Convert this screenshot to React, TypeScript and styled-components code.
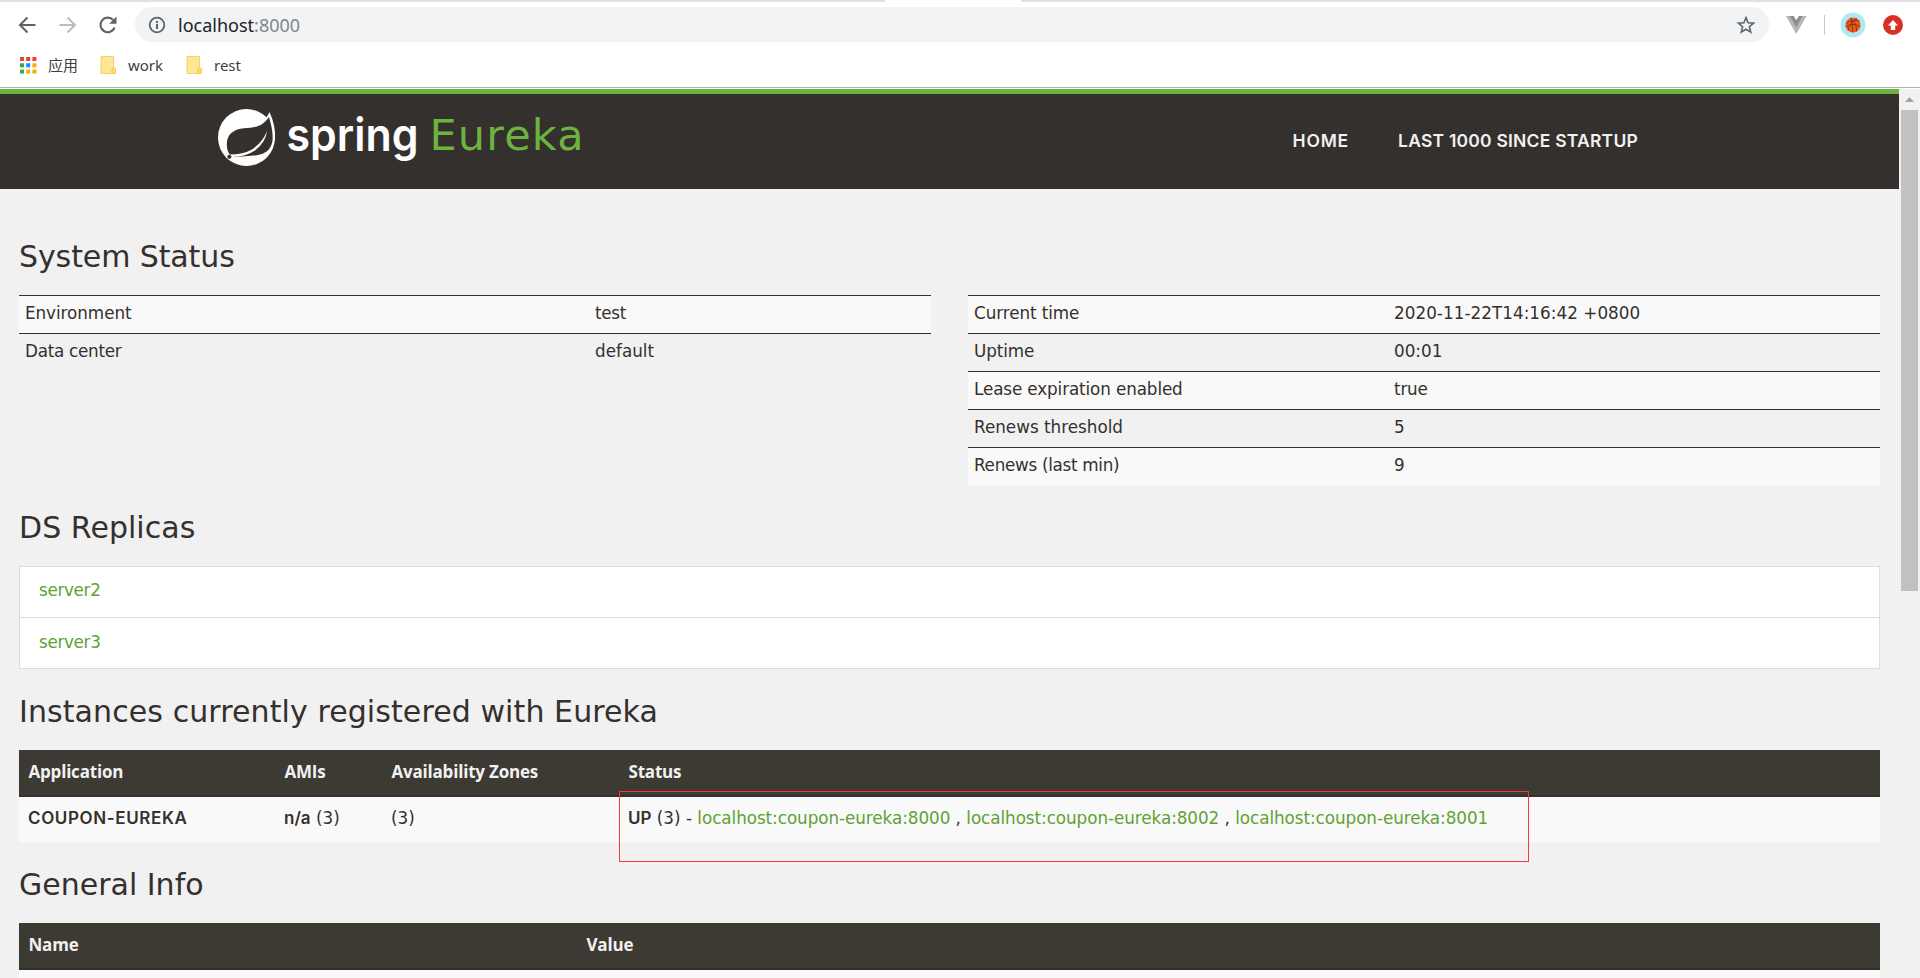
import React from "react";
import styled, { createGlobalStyle } from "styled-components";

const color = {
  ink: "#34302d",
  green: "#6db33f",
  link: "#5fa134",
  page: "#f1f1f1",
  stripe: "#f9f9f9",
  head: "#3d3933",
};

const GlobalStyle = createGlobalStyle`
  * { box-sizing: border-box; }
  body { margin: 0; overflow: hidden; background: ${color.page}; }
`;

const Window = styled.div`
  display: flex;
  flex-direction: column;
  width: 1920px;
  height: 978px;
  overflow: hidden;
  font-family: "DejaVu Sans", sans-serif;
  color: ${color.ink};
`;

/* Browser chrome */
const TabStrip = styled.div`
  display: flex;
  justify-content: space-between;
  height: 2px;
  flex: none;
  background: #fff;
`;
const StripPart = styled.div<{ $w: number }>`
  width: ${(p) => p.$w}px;
  background: #dee1e6;
`;
const Toolbar = styled.div`
  display: flex;
  align-items: center;
  height: 45px;
  flex: none;
  padding-left: 17px;
  background: #fff;
`;
const Glyph = styled.svg<{ $gap?: number }>`
  display: block;
  flex: none;
  margin-right: ${(p) => p.$gap ?? 0}px;
`;
const Omnibox = styled.div`
  display: flex;
  align-items: center;
  width: 1634px;
  height: 35px;
  margin-right: 17px;
  padding: 0 13px;
  border-radius: 18px;
  background: #f1f3f4;
`;
const Address = styled.div`
  flex: 1;
  font: 400 18px/24px "Noto Sans", sans-serif;
  color: #202124;
`;
const Port = styled.span`
  color: #80868b;
`;
const Divider = styled.div`
  width: 1px;
  height: 20px;
  margin: 0 15px 0 17px;
  background: #c9cbce;
`;
const Bookmarks = styled.div`
  display: flex;
  align-items: center;
  height: 41px;
  flex: none;
  padding: 0 0 5px 19px;
  border-bottom: 1px solid #b4b4b4;
  background: #fff;
`;
const Bookmark = styled.div<{ $w: number }>`
  display: flex;
  align-items: center;
  width: ${(p) => p.$w}px;
  font: 400 15px/20px "Noto Sans", "Noto Sans CJK SC", sans-serif;
  color: #3c4043;
`;

/* Page viewport */
const Viewport = styled.div`
  display: flex;
  flex: 1;
  min-height: 0;
  border-top: 1px solid #fff;
`;
const Page = styled.div`
  width: 1899px;
  overflow: hidden;
  background: ${color.page};
`;
const Scrollbar = styled.div`
  display: flex;
  flex-direction: column;
  align-items: center;
  width: 21px;
  background: #f1f1f1;
`;
const ArrowBox = styled.div`
  display: flex;
  align-items: center;
  justify-content: center;
  height: 21px;
`;
const Thumb = styled.div`
  width: 17px;
  height: 481px;
  background: #c1c1c1;
`;

const Navbar = styled.header`
  display: flex;
  justify-content: space-between;
  height: 100px;
  padding: 6px 261px 0 215px;
  border-top: 5px solid ${color.green};
  background: ${color.ink};
`;
const Menu = styled.nav`
  display: flex;
  gap: 49px;
  padding-top: 29px;
`;
const MenuLink = styled.a<{ $ls: number }>`
  font: 600 17.5px/24px Inter, sans-serif;
  letter-spacing: ${(p) => p.$ls}px;
  white-space: nowrap;
  color: #f1f1f1;
`;

const Content = styled.main`
  padding: 25px 19px 0;
`;
const Heading = styled.h1<{ $ls: number }>`
  margin: 26px 0 22px;
  font: 400 30px/33px "DejaVu Sans", sans-serif;
  letter-spacing: ${(p) => p.$ls}px;
`;
const Columns = styled.div`
  display: flex;
  align-items: flex-start;
  gap: 37px;
`;
const StatusTable = styled.div`
  width: 912px;
`;
const StatusRow = styled.div<{ $first: number }>`
  display: grid;
  grid-template-columns: ${(p) => p.$first}px 1fr;
  height: 38px;
  border-top: 1px solid ${color.ink};
  line-height: 25px;
  &:nth-child(odd) {
    background: ${color.stripe};
  }
`;
const StatusCell = styled.div<{ $ls: number }>`
  padding: 5px 6px 0;
  font-size: 16.8px;
  letter-spacing: ${(p) => p.$ls}px;
  white-space: nowrap;
`;
const ReplicaList = styled.div`
  width: 1861px;
  border: 1px solid #ddd;
  background: #fff;
`;
const Replica = styled.a`
  display: block;
  height: 50px;
  padding: 11px 19px 0;
  font-size: 16.8px;
  line-height: 25px;
  letter-spacing: -0.33px;
  color: ${color.link};
  & + & {
    height: 51px;
    padding-top: 12px;
    border-top: 1px solid #ddd;
  }
`;
const DataTable = styled.section<{ $cols: string }>`
  position: relative;
  display: grid;
  grid-template-columns: ${(p) => p.$cols};
  width: 1861px;
`;
const HeadCell = styled.div`
  height: 47px;
  padding: 10px 9.5px 0;
  border-bottom: 2px solid ${color.ink};
  background: ${color.head};
  font: 700 17px/23px "Open Sans", sans-serif;
  letter-spacing: -0.2px;
  color: #f1f1f1;
`;
const BodyCell = styled.div`
  height: 45px;
  padding: 9px 9px 0;
  background: ${color.stripe};
  font-size: 16.8px;
  line-height: 25px;
  white-space: nowrap;
`;
const Strong = styled.b<{ $ls?: number }>`
  font: 600 17px/23px Inter, sans-serif;
  letter-spacing: ${(p) => p.$ls ?? 0}px;
`;
const InstanceLink = styled.a`
  letter-spacing: -0.06px;
  color: ${color.link};
`;
const Highlight = styled.div`
  position: absolute;
  left: 600px;
  top: 41px;
  width: 910px;
  height: 71px;
  border: 1px solid #f53b3b;
`;

const Folder = () => (
  <Glyph width="18" height="20" viewBox="0 0 18 20" $gap={11}>
    <path d="M2 1.5h12.5v12l1.5.8v4.2H2z" fill="#ffe694" stroke="#f5d265" />
    <rect x="13" y="13" width="3.5" height="5.5" rx="1" fill="#ffe070" stroke="#f2c94c" />
  </Glyph>
);

const appColors = ["#ea4335", "#ea4335", "#ea4335", "#34a853", "#1a8cff", "#fbab05", "#34a853", "#fbab05", "#fbab05"];

const SpringLogo = () => (
  <Glyph width="370" height="75" viewBox="0 0 370 75">
    <circle cx="31.5" cy="37.5" r="28.5" fill="#fff" />
    <path d="M47 21Q52 18 54.5 12Q61 26 60 40L50 55Z" fill="#fff" />
    <path
      d="M54 17Q58.8 33 57.3 42C55.5 50 50 54 42 55.2Q32 56.6 17 57Q12 53 11.8 45C11.5 34 19 29 29 28.2C40 27.5 47 27 54 17Z"
      fill={color.ink}
    />
    <path d="M52 31Q48 42 37 49.5Q28 54.5 15 54.5L17 57Q31 56.5 40 50.5Q51 42 52 31Z" fill="#fff" />
    <circle cx="14.3" cy="56.8" r="2.3" fill={color.ink} stroke="#fff" strokeWidth=".5" />
    <text x="71.5" y="50.5" fontFamily="Inter" fontWeight="600" fontSize="46" fill="#fff" textLength="132" lengthAdjust="spacingAndGlyphs">
      spring
    </text>
    <text x="214.5" y="50" fontFamily="DejaVu Sans" fontSize="43" fill={color.green} textLength="154" lengthAdjust="spacing">
      Eureka
    </text>
  </Glyph>
);

type Row = [string, number, string, number];
const environment: Row[] = [
  ["Environment", -0.06, "test", -0.3],
  ["Data center", -0.27, "default", 0],
];
const runtime: Row[] = [
  ["Current time", -0.08, "2020-11-22T14:16:42 +0800", 0.04],
  ["Uptime", -0.1, "00:01", 0],
  ["Lease expiration enabled", -0.12, "true", -0.2],
  ["Renews threshold", 0, "5", 0],
  ["Renews (last min)", -0.3, "9", 0],
];

const Status = ({ rows, first }: { rows: Row[]; first: number }) => (
  <StatusTable>
    {rows.map(([name, nameLs, value, valueLs]) => (
      <StatusRow key={name} $first={first}>
        <StatusCell $ls={nameLs}>{name}</StatusCell>
        <StatusCell $ls={valueLs}>{value}</StatusCell>
      </StatusRow>
    ))}
  </StatusTable>
);

export default function App() {
  return (
    <Window>
      <GlobalStyle />
      <TabStrip>
        <StripPart $w={885} />
        <StripPart $w={899} />
      </TabStrip>
      <Toolbar>
        <Glyph width="20" height="20" viewBox="0 0 20 20" $gap={20} fill="none" stroke="#5f6368" strokeWidth="2">
          <path d="M18.5 10H3.5M10.5 2.5L3 10l7.5 7.5" />
        </Glyph>
        <Glyph width="20" height="20" viewBox="0 0 20 20" $gap={20} fill="none" stroke="#bbbdc0" strokeWidth="2">
          <path d="M2.5 10h15M10.5 2.5L18 10l-7.5 7.5" />
        </Glyph>
        <Glyph width="22" height="20" viewBox="0 0 22 20" $gap={16}>
          <path d="M16.2 5A7.3 7.3 0 1 0 17.6 12.5" fill="none" stroke="#5f6368" strokeWidth="2.1" />
          <path d="M19.5 1.5v7.3h-7.3z" fill="#5f6368" />
        </Glyph>
        <Omnibox>
          <Glyph width="18" height="18" viewBox="0 0 18 18" $gap={12}>
            <circle cx="9" cy="9" r="7.3" fill="none" stroke="#5f6368" strokeWidth="1.8" />
            <path d="M8 8h2v5H8zM8 5h2v2H8z" fill="#5f6368" />
          </Glyph>
          <Address>
            localhost<Port>:8000</Port>
          </Address>
          <Glyph width="20" height="20" viewBox="0 0 20 20">
            <path
              d="M10 2.6l2.1 5.1 5.5.45-4.2 3.6 1.3 5.4L10 14.3l-4.7 2.85 1.3-5.4-4.2-3.6 5.5-.45z"
              fill="none"
              stroke="#5f6368"
              strokeWidth="1.6"
            />
          </Glyph>
        </Omnibox>
        <Glyph width="21" height="18" viewBox="0 0 21 18">
          <path d="M0 0h20.5L10.25 18z" fill="#b5b5b5" />
          <path d="M4 0h4l2.25 3.9L12.5 0h4l-6.25 11z" fill="#8c8c8c" />
          <path d="M7.8 0h4.9l-2.45 4.2z" fill="#fff" />
        </Glyph>
        <Divider />
        <Glyph width="26" height="26" viewBox="0 0 26 26" $gap={16.5}>
          <circle cx="13" cy="13" r="12.5" fill="#aeeaf2" />
          <circle cx="13" cy="13" r="7.6" fill="#f4581c" />
          <path
            d="M6 11.5Q12 7 19.5 9M8 18.5Q11 9 17 6.5M12.5 20.5Q13 12 11 5.7M5.8 15Q13 10 20 14.5M16.5 19.5Q17 13 14 9"
            fill="none"
            stroke="#5a2a1a"
            strokeWidth=".7"
          />
        </Glyph>
        <Glyph width="20" height="20" viewBox="0 0 20 20">
          <circle cx="10" cy="10" r="10" fill="#d93025" />
          <path d="M10 5l5 5.5h-2.8V15H7.8v-4.5H5z" fill="#fff" />
        </Glyph>
      </Toolbar>
      <Bookmarks>
        <Bookmark $w={80}>
          <Glyph width="18" height="18" viewBox="0 0 18 18" $gap={11}>
            {appColors.map((fill, i) => (
              <rect key={i} x={1 + (i % 3) * 6.2} y={1 + Math.floor(i / 3) * 6.3} width="4" height="4" fill={fill} />
            ))}
          </Glyph>
          应用
        </Bookmark>
        <Bookmark $w={86}>
          <Folder />
          work
        </Bookmark>
        <Bookmark $w={86}>
          <Folder />
          rest
        </Bookmark>
      </Bookmarks>
      <Viewport>
        <Page>
          <Navbar>
            <SpringLogo />
            <Menu>
              <MenuLink $ls={0.8}>HOME</MenuLink>
              <MenuLink $ls={0.22}>LAST 1000 SINCE STARTUP</MenuLink>
            </Menu>
          </Navbar>
          <Content>
            <Heading $ls={-0.1}>System Status</Heading>
            <Columns>
              <Status rows={environment} first={570} />
              <Status rows={runtime} first={420} />
            </Columns>
            <Heading $ls={0.05}>DS Replicas</Heading>
            <ReplicaList>
              <Replica>server2</Replica>
              <Replica>server3</Replica>
            </ReplicaList>
            <Heading $ls={0.09}>Instances currently registered with Eureka</Heading>
            <DataTable $cols="256px 107px 237px 1fr">
              <HeadCell>Application</HeadCell>
              <HeadCell>AMIs</HeadCell>
              <HeadCell>Availability Zones</HeadCell>
              <HeadCell>Status</HeadCell>
              <BodyCell>
                <Strong $ls={0.62}>COUPON-EUREKA</Strong>
              </BodyCell>
              <BodyCell>
                <Strong>n/a</Strong> (3)
              </BodyCell>
              <BodyCell>(3)</BodyCell>
              <BodyCell>
                <Strong>UP</Strong> (3) - <InstanceLink>localhost:coupon-eureka:8000</InstanceLink> ,{" "}
                <InstanceLink>localhost:coupon-eureka:8002</InstanceLink> ,{" "}
                <InstanceLink>localhost:coupon-eureka:8001</InstanceLink>
              </BodyCell>
              <Highlight />
            </DataTable>
            <Heading $ls={0}>General Info</Heading>
            <DataTable $cols="558px 1fr">
              <HeadCell>Name</HeadCell>
              <HeadCell>Value</HeadCell>
              <BodyCell />
              <BodyCell />
            </DataTable>
          </Content>
        </Page>
        <Scrollbar>
          <ArrowBox>
            <Glyph width="9" height="5" viewBox="0 0 9 5">
              <path d="M4.5 0L9 5H0z" fill="#a3a3a3" />
            </Glyph>
          </ArrowBox>
          <Thumb />
        </Scrollbar>
      </Viewport>
    </Window>
  );
}
